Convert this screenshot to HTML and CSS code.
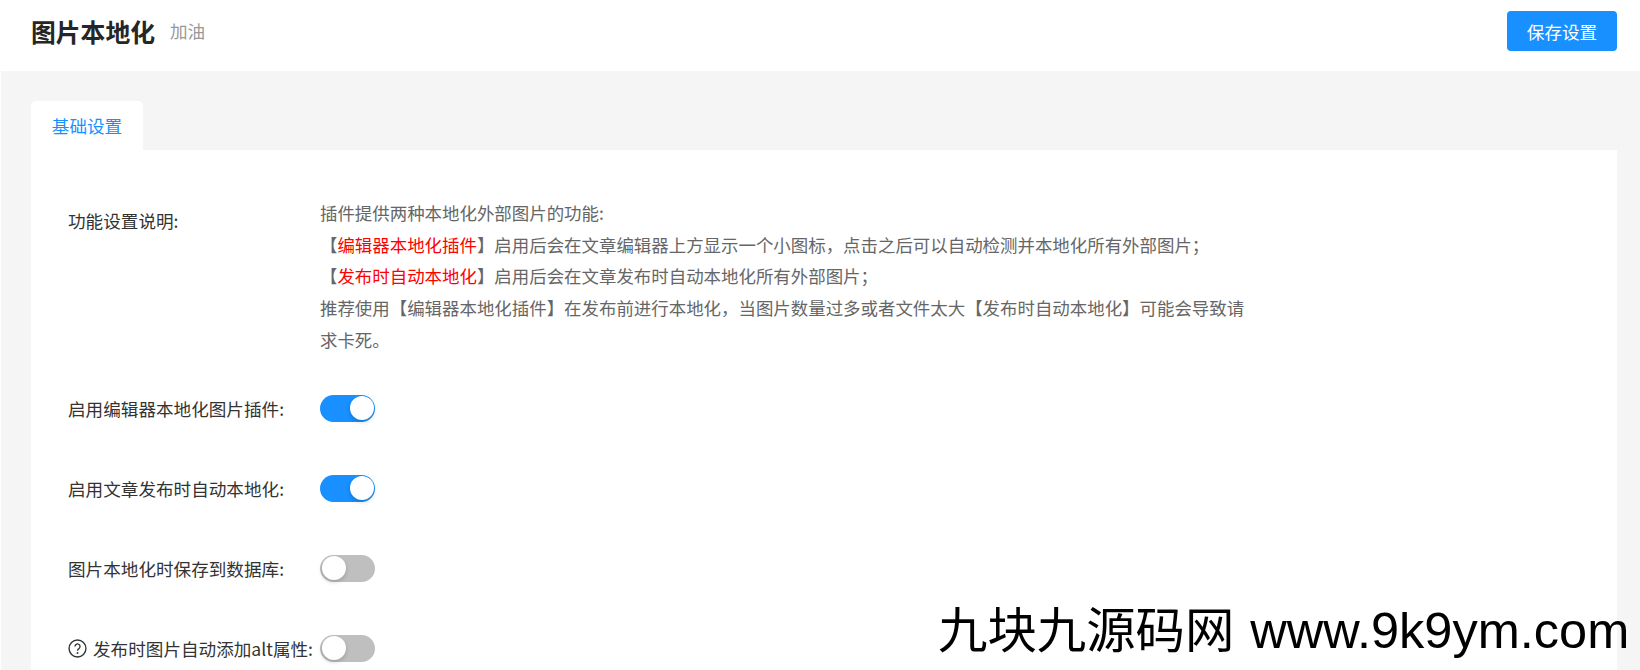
FILE: index.html
```html
<!DOCTYPE html>
<html>
<head>
  <meta charset="utf-8">
  <title>图片本地化</title>
  <link rel="stylesheet" href="styles.css">
</head>
<body>
  <header class="topbar">
    <div class="heading">
      <h1>图片本地化</h1>
      <span class="subtitle">加油</span>
    </div>
    <button class="save">保存设置</button>
  </header>
  <main class="content">
    <div class="tabs">
      <div class="tab">基础设置</div>
    </div>
    <div class="card">
      <div class="row row-top">
        <div class="label label-top">功能设置说明:</div>
        <div class="desc">
          插件提供两种本地化外部图片的功能:<br>
          【<span class="red">编辑器本地化插件</span>】启用后会在文章编辑器上方显示一个小图标，点击之后可以自动检测并本地化所有外部图片；<br>
          【<span class="red">发布时自动本地化</span>】启用后会在文章发布时自动本地化所有外部图片；<br>
          推荐使用【编辑器本地化插件】在发布前进行本地化，当图片数量过多或者文件太大【发布时自动本地化】可能会导致请求卡死。
        </div>
      </div>
      <div class="row">
        <div class="label">启用编辑器本地化图片插件:</div>
        <span class="switch on"></span>
      </div>
      <div class="row">
        <div class="label">启用文章发布时自动本地化:</div>
        <span class="switch on"></span>
      </div>
      <div class="row">
        <div class="label">图片本地化时保存到数据库:</div>
        <span class="switch"></span>
      </div>
      <div class="row">
        <div class="label">
          <svg class="help" viewBox="0 0 18 18" width="19" height="19">
            <circle cx="9" cy="9" r="8" fill="none" stroke="#333" stroke-width="1.3"/>
            <path d="M6.6 7.1a2.4 2.4 0 1 1 3.7 2c-.9.6-1.3 1-1.3 2" fill="none" stroke="#333" stroke-width="1.3"/>
            <circle cx="9" cy="13.2" r=".9" fill="#333"/>
          </svg>
          <span>发布时图片自动添加alt属性:</span>
        </div>
        <span class="switch"></span>
      </div>
    </div>
  </main>
  <div class="watermark"><span class="watermark-cn">九块九源码网</span> www.9k9ym.com</div>
</body>
</html>
```

FILE: styles.css
```css
html, body { margin: 0; height: 670px; overflow: hidden; }
body { font-family: "Noto Sans CJK SC", sans-serif; font-size: 17.6px; color: #333; background: #fff; position: relative; }

.topbar { height: 71px; display: flex; align-items: center; justify-content: space-between; padding: 0 23px 9px 31px; background: #fff; box-sizing: border-box; }
.heading { display: flex; align-items: center; gap: 15px; }
h1 { margin: 0; font-size: 24.8px; font-weight: 700; color: #262626; line-height: 1.4; }
.subtitle { color: #999; line-height: 1.4; }
.save { width: 110px; height: 40px; border: 0; border-radius: 4px; background: #1890ff; color: #fff; font: inherit; padding: 0; }

.content { margin-left: 1px; background: #f5f5f5; padding: 30px 23px 0 30px; height: 599px; box-sizing: border-box; display: flex; flex-direction: column; }
.tabs { display: flex; height: 49px; flex: none; }
.tab { width: 112px; background: #fff; color: #1890ff; text-align: center; line-height: 49px; border-radius: 5px 5px 0 0; }

.card { flex: 1; background: #fff; padding: 47px 37px 0; }
.row { display: flex; align-items: center; height: 27px; margin-bottom: 53px; }
.row:last-child { margin-bottom: 0; }
.row-top { align-items: flex-start; height: auto; margin-bottom: 39px; }
.label { width: 252px; flex: none; white-space: nowrap; display: flex; align-items: center; gap: 6px; line-height: 27px; }
.label-top { padding-top: 10px; }
.help { flex: none; }
.desc { width: 940px; color: #666; font-size: 17.45px; line-height: 31.7px; }
.red { color: #f00; }

.switch { display: block; width: 55px; height: 27px; border-radius: 14px; background: #bfbfbf; position: relative; }
.switch::after { content: ""; position: absolute; top: 1.5px; left: 1.5px; width: 24px; height: 24px; border-radius: 50%; background: #fff; box-shadow: 0 2px 4px rgba(0, 35, 11, .2); }
.switch.on { background: #1890ff; }
.switch.on::after { left: 29.5px; }

.watermark { position: absolute; left: 938px; top: 598px; font-family: "Liberation Sans", "Noto Sans CJK SC", sans-serif; font-size: 50.5px; line-height: 66px; color: #000; white-space: nowrap; }
.watermark-cn { font-size: 49.4px; margin-right: 2px; }
```
